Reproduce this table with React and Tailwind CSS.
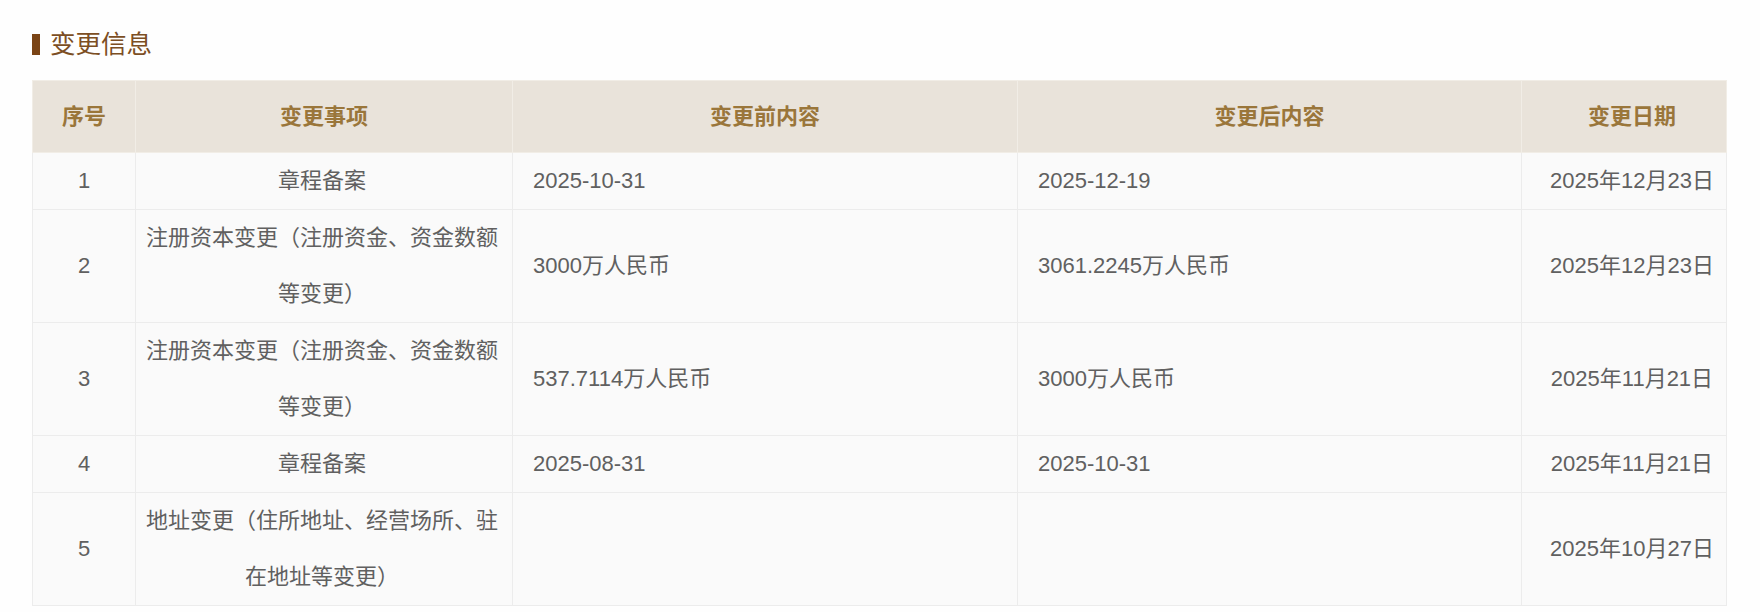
import React from "react";

const rows = [
  { no: "1", item: "章程备案", before: "2025-10-31", after: "2025-12-19", date: "2025年12月23日" },
  { no: "2", item: "注册资本变更（注册资金、资金数额等变更）", before: "3000万人民币", after: "3061.2245万人民币", date: "2025年12月23日" },
  { no: "3", item: "注册资本变更（注册资金、资金数额等变更）", before: "537.7114万人民币", after: "3000万人民币", date: "2025年11月21日" },
  { no: "4", item: "章程备案", before: "2025-08-31", after: "2025-10-31", date: "2025年11月21日" },
  { no: "5", item: "地址变更（住所地址、经营场所、驻在地址等变更）", before: "", after: "", date: "2025年10月27日" },
];

const heads = ["序号", "变更事项", "变更前内容", "变更后内容", "变更日期"];

export default function App() {
  return (
    <div className="min-h-[612px] w-[1760px] bg-[#fefefe] px-[32px] pt-[28px] font-['Liberation_Sans','Noto_Sans_CJK_SC',sans-serif]">
      <div className="flex h-[32px] items-center gap-[10px]">
        <div className="h-[21px] w-[8px] bg-[#7a4415]" />
        <div className="text-[25.5px] leading-[32px] text-[#7c4e23]">变更信息</div>
      </div>
      <table className="mt-[20px] w-[1694px] table-fixed border-collapse">
        <colgroup>
          <col className="w-[103px]" />
          <col className="w-[377px]" />
          <col className="w-[505px]" />
          <col className="w-[504px]" />
          <col className="w-[205px]" />
        </colgroup>
        <thead>
          <tr className="bg-[#e9e3da]">
            {heads.map((h, i) => (
              <th
                key={h}
                className={
                  i === 4
                    ? "h-[72px] border border-[#f1ede6] py-0 pl-[16px] pr-0 text-center align-middle text-[22px] font-bold text-[#9a763a]"
                    : "h-[72px] border border-[#f1ede6] p-0 text-center align-middle text-[22px] font-bold text-[#9a763a]"
                }
              >
                {h}
              </th>
            ))}
          </tr>
        </thead>
        <tbody className="bg-[#fafafa] text-[22px] leading-[56px] text-[#606060]">
          {rows.map((r) => (
            <tr key={r.no}>
              <td className="border border-[#ececec] p-0 text-center align-middle">{r.no}</td>
              <td className="border border-[#ececec] py-0 pl-[8px] pr-[12px] text-center align-middle">{r.item}</td>
              <td className="border border-[#ececec] py-0 pl-[20px] pr-[10px] text-left align-middle">{r.before}</td>
              <td className="border border-[#ececec] py-0 pl-[20px] pr-[10px] text-left align-middle">{r.after}</td>
              <td className="border border-[#ececec] py-0 pl-[16px] pr-0 text-center align-middle whitespace-nowrap">{r.date}</td>
            </tr>
          ))}
        </tbody>
      </table>
    </div>
  );
}
